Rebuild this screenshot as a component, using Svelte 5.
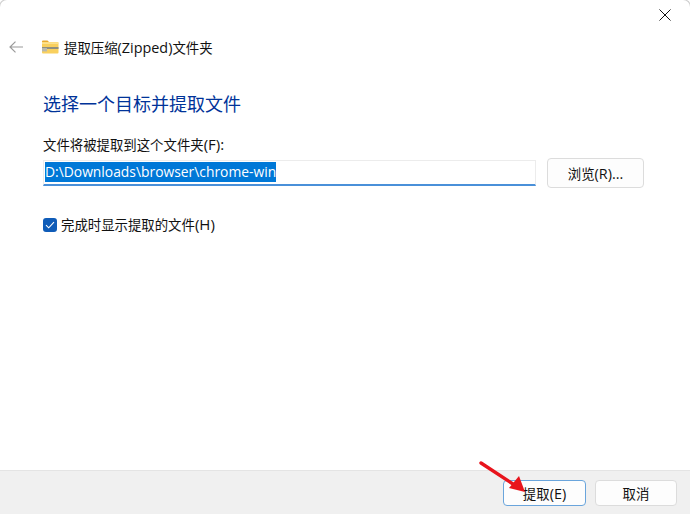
<script lang="ts">
	let showFiles = $state(true);
	let target = 'D:\\Downloads\\browser\\chrome-win';
</script>

<div class="wizard">
	<button type="button" class="close" aria-label="关闭">
		<svg width="12" height="12" viewBox="0 0 12 12"><path d="M.5.5l11 11M11.5.5l-11 11" fill="none" stroke="#111" stroke-width="1" /></svg>
	</button>

	<main class="content">
		<header class="title-row">
			<svg class="back" width="14" height="12" viewBox="0 0 14 12"><path d="M6.5.6 1 6l5.5 5.4M1 6h13" fill="none" stroke="#9a9a9a" stroke-width="1.2" /></svg>
			<svg class="folder" width="18" height="16" viewBox="0 0 18 16">
				<path d="M1 2.5A1 1 0 0 1 2 1.5h4.5l2 2H1z" fill="#e8a92e" />
				<rect x="1" y="3" width="16.5" height="11.5" rx="1" fill="#f9d05e" />
				<rect x="1" y="3.4" width="16.5" height="1.4" fill="#fde79b" />
				<rect x="1" y="8" width="16.5" height="2" fill="#8f8f80" />
				<rect x="1" y="9" width="5" height="3.4" fill="#b8b8ac" />
			</svg>
			<span class="title">提取压缩<span class="latin">(Zipped)</span>文件夹</span>
		</header>

		<h1>选择一个目标并提取文件</h1>

		<label class="field-label" for="target">文件将被提取到这个文件夹<span class="latin wide">(F):</span></label>
		<div class="target-row">
			<div class="input" id="target"><span class="selected">{target}</span></div>
			<button type="button" class="btn browse">浏览<span class="latin">(R)...</span></button>
		</div>

		<button type="button" class="check-row" onclick={() => (showFiles = !showFiles)}>
			<span class="box">
				{#if showFiles}
					<svg width="10" height="8" viewBox="0 0 10 8"><path d="M1 4.2 3.7 6.8 9 1.2" fill="none" stroke="#fff" stroke-width="1.1" /></svg>
				{/if}
			</span>
			<span>完成时显示提取的文件<span class="latin wide">(H)</span></span>
		</button>
	</main>

	<footer>
		<button type="button" class="btn primary">提取<span class="latin">(E)</span></button>
		<button type="button" class="btn">取消</button>
	</footer>

	<svg class="annotation" width="60" height="46" viewBox="0 0 60 46">
		<path d="M3 3 38 26" stroke="#e8141c" stroke-width="3.4" stroke-linecap="round" />
		<path d="M47 32 31 28 41 16z" fill="#e8141c" />
	</svg>
</div>

<style>
	:global(body) {
		background: #fff;
	}

	.wizard {
		position: relative;
		width: 690px;
		height: 514px;
		display: flex;
		flex-direction: column;
		background: #fff;
		color: #111;
		font-family: "Open Sans", "Noto Sans CJK SC", sans-serif;
		font-size: 13.4px;
		overflow: hidden;
	}

	/* rounded window corners, only the arcs land inside the crop */
	.wizard::after {
		content: '';
		position: absolute;
		top: -1px;
		left: -1px;
		right: -1px;
		height: 20px;
		box-sizing: border-box;
		border: 1px solid #cfcfcf;
		border-bottom: 0;
		border-radius: 8px 8px 0 0;
		pointer-events: none;
	}

	.latin {
		font-size: 14.4px;
		line-height: 1;
	}

	.latin.wide {
		font-size: 15px;
	}

	.close {
		position: absolute;
		top: 9px;
		right: 19px;
		padding: 0;
		border: 0;
		background: none;
		display: flex;
		z-index: 1;
	}

	.content {
		flex: 1;
		padding: 39px 46px 0 43px;
		display: flex;
		flex-direction: column;
	}

	.title-row {
		display: flex;
		align-items: center;
		height: 16px;
		margin-left: -34px;
	}

	.back {
		margin-right: 18px;
	}

	.folder {
		margin-right: 5px;
	}

	h1 {
		margin: 36px 0 0;
		font-size: 18px;
		font-weight: 400;
		line-height: 26px;
		color: #003399;
	}

	.field-label {
		margin-top: 18px;
		height: 20px;
		line-height: 20px;
	}

	.target-row {
		display: flex;
		align-items: center;
		gap: 11px;
		margin-top: 3px;
	}

	.input {
		box-sizing: border-box;
		width: 493px;
		height: 26px;
		padding: 1px 0 0 1px;
		border: 1px solid #ececec;
		border-bottom: 2px solid #4a90d9;
		font-size: 13.85px;
		line-height: 20px;
	}

	.selected {
		display: inline-block;
		background: #0078d7;
		color: #fff;
	}

	.btn {
		box-sizing: border-box;
		width: 82px;
		height: 26px;
		padding: 0;
		border: 1px solid #dcdcdc;
		border-radius: 4px;
		background: #fdfdfd;
		color: #111;
		font: inherit;
	}

	.browse {
		width: 97px;
		height: 30px;
	}

	.check-row {
		display: flex;
		align-items: center;
		gap: 4px;
		margin-top: 27px;
		padding: 0;
		border: 0;
		background: none;
		color: inherit;
		font: inherit;
		line-height: 20px;
		align-self: flex-start;
	}

	.box {
		width: 14px;
		height: 14px;
		border-radius: 3px;
		background: #0f5cb8;
		display: flex;
		align-items: center;
		justify-content: center;
	}

	footer {
		box-sizing: border-box;
		height: 44px;
		padding: 9px 13px 0 0;
		display: flex;
		justify-content: flex-end;
		gap: 9px;
		background: #f0f0f0;
		border-top: 1px solid #e4e4e4;
	}

	.primary {
		width: 83px;
		border-color: #6aa5dc;
	}

	.annotation {
		position: absolute;
		left: 478px;
		top: 460px;
	}
</style>
